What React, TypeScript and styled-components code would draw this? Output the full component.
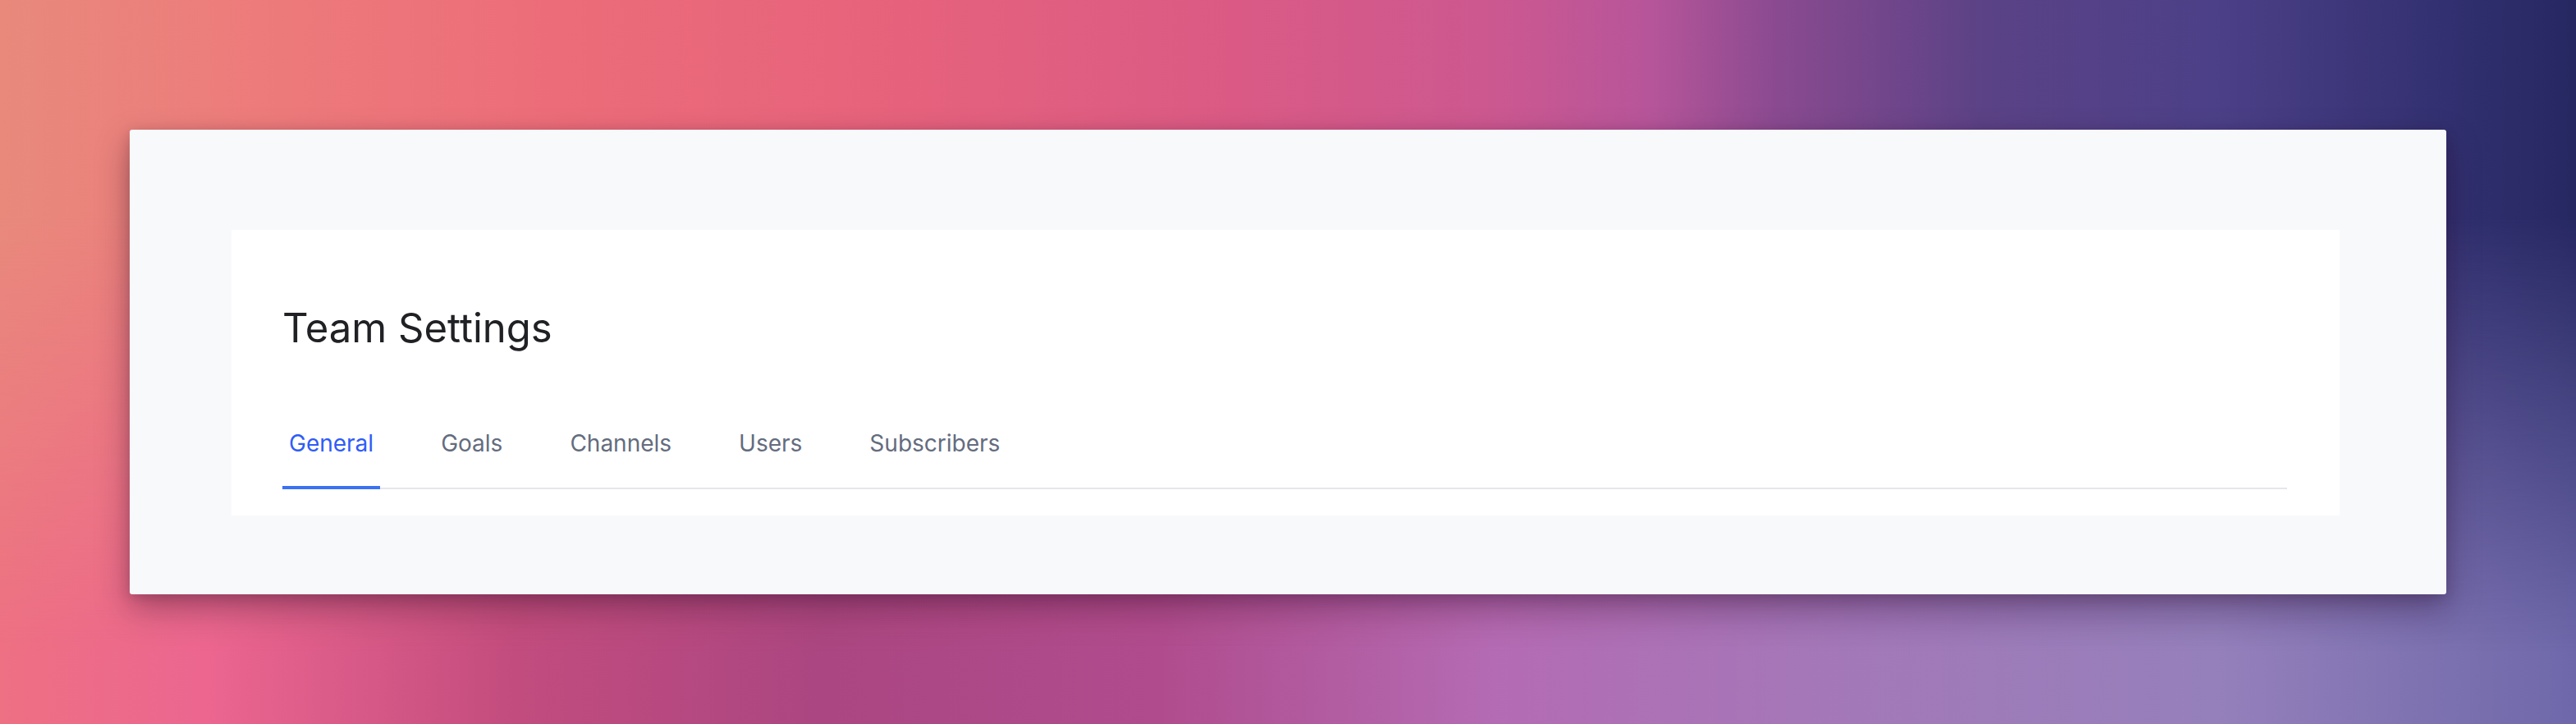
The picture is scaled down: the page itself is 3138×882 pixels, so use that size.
import * as React from 'react'
import styled, { createGlobalStyle, css } from 'styled-components'

const GlobalStyle = createGlobalStyle`
    html, body {
        margin: 0;
        padding: 0;
        width: 3138px;
        height: 882px;
        overflow: hidden;
    }
    body {
        font-family: Inter, "Noto Sans", "Liberation Sans", sans-serif;
    }
`

const TABS = ['General', 'Goals', 'Channels', 'Users', 'Subscribers']

export default function App() {
    const [activeTab, setActiveTab] = React.useState('General')

    return (
        <>
            <GlobalStyle />
            <Backdrop>
                <SettingsWindow>
                    <SettingsPanel>
                        <PageTitle>Team Settings</PageTitle>
                        <TabList>
                            {TABS.map((tab) => (
                                <Tab key={tab} active={tab === activeTab} onClick={() => setActiveTab(tab)}>
                                    {tab}
                                </Tab>
                            ))}
                        </TabList>
                    </SettingsPanel>
                </SettingsWindow>
            </Backdrop>
        </>
    )
}

const Backdrop = styled.div`
    position: relative;
    width: 3138px;
    height: 882px;
    box-sizing: border-box;
    padding: 158px 0 0 158px;
    background: linear-gradient(
        90deg,
        #ee7083 0%,
        #ec6690 8%,
        #c24c7e 20%,
        #ab4682 32%,
        #b04c8e 45%,
        #b46bb3 58%,
        #a577b8 70%,
        #9580bb 86%,
        #6e68aa 100%
    );

    &::before {
        content: '';
        position: absolute;
        inset: 0;
        background: linear-gradient(
            90deg,
            #e8897c 0%,
            #ed7b7b 10%,
            #ec6c79 22%,
            #e6627c 35%,
            #da5a85 48%,
            #cc5890 58%,
            #b7559a 64%,
            #8a4a90 69%,
            #5b4286 77%,
            #4c4088 86%,
            #323070 95%,
            #262862 100%
        );
        -webkit-mask-image: linear-gradient(180deg, #000 0%, #000 30%, transparent 90%);
        mask-image: linear-gradient(180deg, #000 0%, #000 30%, transparent 90%);
    }
`

const SettingsWindow = styled.div`
    position: relative;
    width: 2822px;
    height: 566px;
    box-sizing: border-box;
    padding: 122px 0 0 124px;
    background-color: #f8f9fb;
    border-radius: 3px;
    box-shadow: 0 18px 40px rgba(40, 10, 40, 0.35), 0 4px 16px rgba(40, 10, 40, 0.18);
`

const SettingsPanel = styled.div`
    width: 2568px;
    box-sizing: border-box;
    padding: 96px 64px 32px 62px;
    background-color: #ffffff;
    display: flex;
    flex-direction: column;
`

const PageTitle = styled.h1`
    margin: 0 0 102px 0;
    font-size: 49px;
    line-height: 48px;
    font-weight: 400;
    color: #202124;
`

const TabList = styled.div`
    display: flex;
    gap: 66px;
    border-bottom: 2px solid #e6e6ec;
`

const Tab = styled.div`
    padding: 0 8px 38px;
    margin-bottom: -2px;
    font-size: 28px;
    line-height: 28px;
    color: #646c7e;
    border-bottom: 4px solid transparent;
    cursor: pointer;

    ${({ active }) =>
        active &&
        css`
            color: #2f5cf8;
            border-bottom-color: #3b72f2;
    `}
`
